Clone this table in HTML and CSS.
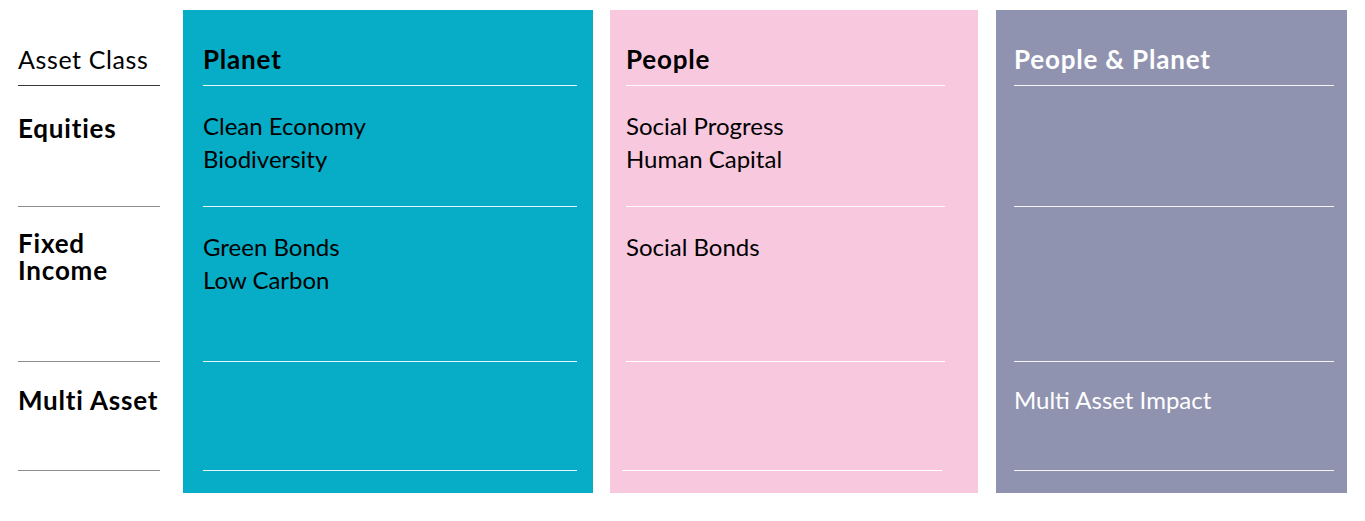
FILE: index.html
```html
<!DOCTYPE html>
<html lang="en">
<head>
<meta charset="utf-8">
<title>Asset Class</title>
<link rel="stylesheet" href="styles.css">
</head>
<body>
<div class="table">
  <div class="col labels">
    <div class="cell head"><span class="label-light">Asset Class</span></div>
    <div class="cell r1"><span class="label">Equities</span></div>
    <div class="cell r2"><span class="label tight">Fixed<br>Income</span></div>
    <div class="cell r3"><span class="label">Multi Asset</span></div>
  </div>
  <div class="col planet">
    <div class="cell head"><span class="title">Planet</span></div>
    <div class="cell r1"><p class="items">Clean Economy<br>Biodiversity</p></div>
    <div class="cell r2"><p class="items">Green Bonds<br>Low Carbon</p></div>
    <div class="cell r3"></div>
  </div>
  <div class="col people">
    <div class="cell head"><span class="title">People</span></div>
    <div class="cell r1"><p class="items">Social Progress<br>Human Capital</p></div>
    <div class="cell r2"><p class="items">Social Bonds</p></div>
    <div class="cell r3"></div>
  </div>
  <div class="col both">
    <div class="cell head"><span class="title">People &amp; Planet</span></div>
    <div class="cell r1"></div>
    <div class="cell r2"></div>
    <div class="cell r3"><p class="items">Multi Asset Impact</p></div>
  </div>
</div>
</body>
</html>
```
FILE: styles.css
```css
html, body {
  margin: 0;
  padding: 0;
  background: #ffffff;
}
body {
  font-family: "Lato", "Open Sans", sans-serif;
  color: #000;
}
.table {
  display: grid;
  grid-template-columns: 165px 427px 386px 351px;
  padding: 10px 0 0 18px;
}
.col {
  display: flex;
  flex-direction: column;
  padding-bottom: 22px;
}
.labels { margin-right: 23px; }
.planet { background: #07adc6; margin-right: 17px; padding-left: 20px; padding-right: 16px; }
.people { background: #f8c8df; margin-right: 18px; padding-left: 16px; padding-right: 33px; }
.both { background: #9093b0; padding-left: 18px; padding-right: 13px; color: #fff; }

.cell {
  border-bottom: 1px solid rgba(255,255,255,0.9);
}
.labels .cell { border-bottom-color: #8c8c8c; }
.labels .head { border-bottom-color: #33383a; }
.head {
  height: 76px;
  display: flex;
  align-items: flex-end;
  padding-bottom: 11px;
  box-sizing: border-box;
}
.r1 { height: 120px; }
.r2 { height: 154px; }
.r3 { height: 108px; }

.people .r2, .people .r3 { border-bottom-color: #fff; }
.people .r3 { margin-left: -4px; margin-right: 3px; }

.title {
  font-size: 26px;
  font-weight: 700;
  line-height: 30px;
  letter-spacing: 0.8px;
}
.label-light {
  font-size: 25px;
  font-weight: 400;
  line-height: 30px;
  letter-spacing: 0.6px;
  white-space: nowrap;
}
.label {
  display: block;
  font-size: 26px;
  font-weight: 700;
  line-height: 30px;
  letter-spacing: 0.8px;
  padding-top: 27px;
  white-space: nowrap;
}
.label.tight { line-height: 27px; padding-top: 23px; }
.r3 .label { padding-top: 23px; }
.items {
  margin: 0;
  font-size: 24px;
  line-height: 33px;
  padding-top: 23px;
}
.r3 .items { padding-top: 21px; }
.people .r3 .items { padding-left: 4px; }
```
